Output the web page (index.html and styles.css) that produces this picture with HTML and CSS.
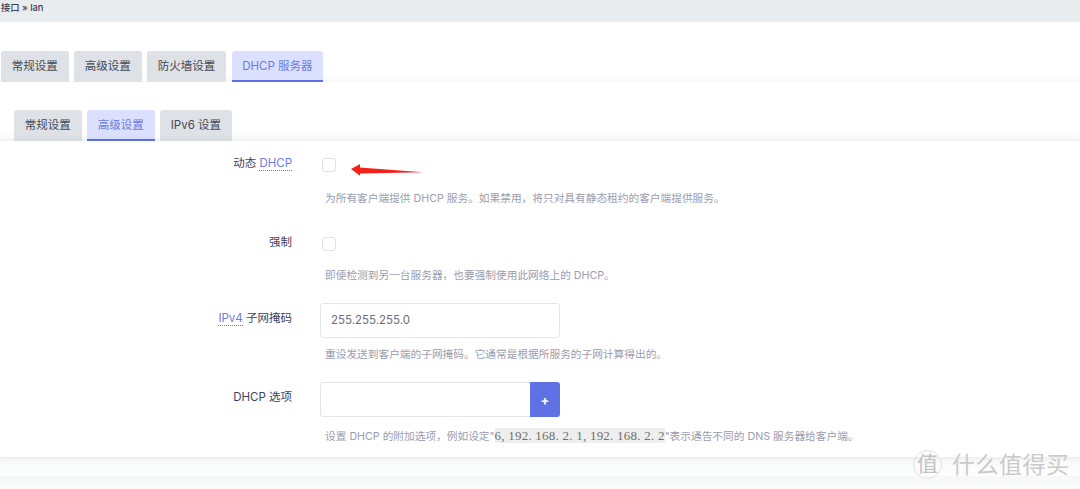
FILE: index.html
```html
<!DOCTYPE html>
<html lang="zh-CN">
<head>
    <meta charset="UTF-8">
    <title>接口 - lan</title>
    <link rel="stylesheet" href="styles.css">
</head>
<body>
    <div class="crumb">接口 » lan</div>

    <ul class="tabs tabs-main">
        <li class="tab">常规设置</li>
        <li class="tab">高级设置</li>
        <li class="tab">防火墙设置</li>
        <li class="tab active">DHCP 服务器</li>
    </ul>

    <ul class="tabs tabs-sub">
        <li class="tab">常规设置</li>
        <li class="tab active">高级设置</li>
        <li class="tab">IPv6 设置</li>
    </ul>

    <div class="panel">
        <div class="row row-check">
            <label class="label">动态 <abbr>DHCP</abbr></label>
            <div class="field">
                <span class="check"></span>
                <p class="desc">为所有客户端提供 DHCP 服务。如果禁用，将只对具有静态租约的客户端提供服务。</p>
            </div>
        </div>
        <div class="row row-check">
            <label class="label">强制</label>
            <div class="field">
                <span class="check"></span>
                <p class="desc">即便检测到另一台服务器，也要强制使用此网络上的 DHCP。</p>
            </div>
        </div>
        <div class="row row-input">
            <label class="label"><abbr>IPv4</abbr> 子网掩码</label>
            <div class="field">
                <div class="input">255.255.255.0</div>
                <p class="desc">重设发送到客户端的子网掩码。它通常是根据所服务的子网计算得出的。</p>
            </div>
        </div>
        <div class="row row-input">
            <label class="label">DHCP 选项</label>
            <div class="field">
                <div class="input-group">
                    <div class="input"></div>
                    <button class="add">+</button>
                </div>
                <p class="desc">设置 DHCP 的附加选项，例如设定"<code>6, 192. 168. 2. 1, 192. 168. 2. 2</code>"表示通告不同的 DNS 服务器给客户端。</p>
            </div>
        </div>
    </div>
    <div class="band"></div>
    <div class="band"></div>

    <svg class="arrow" width="76" height="16" viewBox="0 0 76 16">
        <path d="M0 5 L9 0 L9 3.5 L72 8.3 L9 9.5 L9 11.7 Z" fill="#f5211c"/>
    </svg>

    <div class="mark">
        <span class="mark-logo">值</span>
        <span class="mark-text">什么值得买</span>
    </div>
</body>
</html>
```

FILE: styles.css
```css
body {
    margin: 0;
    height: 489px;
    overflow: hidden;
    position: relative;
    background-color: #fff;
    font-family: 'Inter', 'Noto Sans CJK SC', sans-serif;
    font-size: 12px;
    color: #404257;
}

.crumb {
    height: 22px;
    padding-left: 1px;
    background-color: #e9ecef;
    font-size: 9.3px;
    font-weight: 500;
    line-height: 15px;
    color: #3c4050;
}

.tabs {
    display: flex;
    list-style: none;
    margin: 0;
    padding: 0;
    height: 31px;
    gap: 5.5px;
}

.tabs-main {
    margin-top: 29px;
    padding-left: 1px;
    background: linear-gradient(transparent 22px, #f8f9f9 31px);
}

.tabs-sub {
    margin-top: 28px;
    padding-left: 14px;
    background: linear-gradient(transparent 20px, #f8f9f9 31px);
}

.tab {
    padding: 0 10.75px;
    height: 31px;
    line-height: 31px;
    box-sizing: border-box;
    background-color: #dee2e6;
    border-radius: 3px 3px 0 0;
    color: #444854;
    font-size: 11.5px;
}

.tab.active {
    background-color: #dce0ff;
    border-bottom: 2px solid #5e72e4;
    color: #6b7ae0;
}

.panel {
    height: 316px;
    padding-top: 17px;
    box-sizing: border-box;
    background-color: #fff;
    box-shadow: 0 0 6px rgba(0, 0, 0, 0.08);
    position: relative;
}

.band {
    height: 19px;
    background: linear-gradient(#f6f8f8, #fefefe);
}

.row {
    display: flex;
}

.row-check {
    height: 79px;
}

.row-check + .row-check {
    height: 66px;
}

.row-input {
    height: 79px;
}

.label {
    width: 292px;
    margin-top: -2px;
    text-align: right;
    font-size: 11.5px;
    line-height: 14px;
    color: #3f4160;
}

.row-input .label {
    margin-top: 8px;
}

abbr {
    color: #6b7ae0;
    border-bottom: 1px dotted #6b7ae0;
}

.field {
    margin-left: 28px;
    width: 700px;
}

.check {
    display: block;
    width: 12px;
    height: 12px;
    margin-left: 2px;
    border: 1px solid #dee2e6;
    border-radius: 3px;
}

.input {
    width: 240px;
    height: 35px;
    box-sizing: border-box;
    padding-left: 10px;
    border: 1px solid #e2e5ea;
    border-radius: 3px;
    font-size: 11.5px;
    line-height: 33px;
    color: #6d6e78;
}

.input-group {
    display: flex;
    width: 240px;
}

.input-group .input {
    width: 210px;
    border-right: none;
    border-radius: 3px 0 0 3px;
}

.add {
    width: 30px;
    height: 35px;
    padding: 0;
    border: none;
    border-radius: 0 3px 3px 0;
    background-color: #5e72e4;
    color: #fff;
    font-family: inherit;
    font-size: 13px;
    font-weight: 700;
}

.desc {
    margin: 0 0 0 5px;
    font-size: 10.7px;
    line-height: 16px;
    color: #9a9cae;
    white-space: nowrap;
}

.row-check .desc {
    margin-top: 19px;
}

.row-check + .row-check .desc {
    margin-top: 17px;
}

.row-input .desc {
    margin-top: 9px;
}

.row-input + .row-input .desc {
    margin-top: 11px;
}

code {
    background-color: #eee;
    font-family: 'Liberation Serif', serif;
    font-size: 13px;
    letter-spacing: 0.23px;
    color: #6f6f6f;
}

.arrow {
    position: absolute;
    left: 351px;
    top: 164px;
}

.mark {
    position: absolute;
    left: 913px;
    top: 450px;
    display: flex;
    align-items: center;
    gap: 10px;
    color: #cacaca;
}

.mark-logo {
    width: 29px;
    height: 29px;
    box-sizing: border-box;
    border: 1px solid #e2e2e2;
    border-radius: 50%;
    text-align: center;
    font-size: 21px;
    line-height: 25px;
    color: #c2c2c2;
}

.mark-text {
    font-size: 23px;
    line-height: 28px;
    letter-spacing: 0.5px;
}
```
